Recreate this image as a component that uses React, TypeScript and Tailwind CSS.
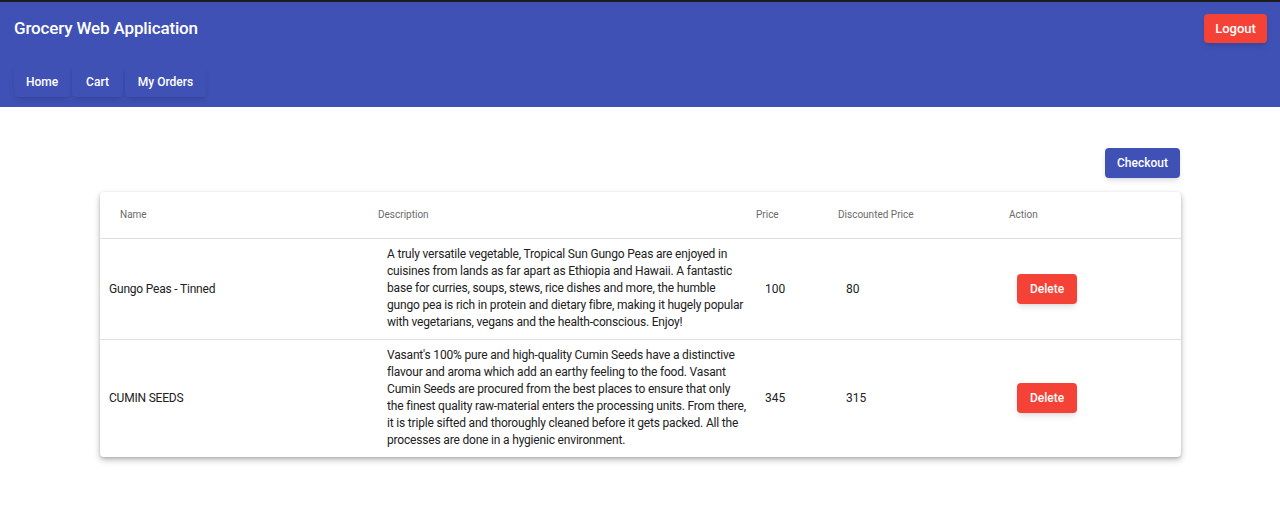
import React from "react";

const items = [
  {
    name: "Gungo Peas - Tinned",
    description:
      "A truly versatile vegetable, Tropical Sun Gungo Peas are enjoyed in cuisines from lands as far apart as Ethiopia and Hawaii. A fantastic base for curries, soups, stews, rice dishes and more, the humble gungo pea is rich in protein and dietary fibre, making it hugely popular with vegetarians, vegans and the health-conscious. Enjoy!",
    price: 100,
    discounted: 80,
  },
  {
    name: "CUMIN SEEDS",
    description:
      "Vasant's 100% pure and high-quality Cumin Seeds have a distinctive flavour and aroma which add an earthy feeling to the food. Vasant Cumin Seeds are procured from the best places to ensure that only the finest quality raw-material enters the processing units. From there, it is triple sifted and thoroughly cleaned before it gets packed. All the processes are done in a hygienic environment.",
    price: 345,
    discounted: 315,
  },
];

const App = () => {
  return (
    <div className="min-h-[522px] bg-white font-['Roboto',sans-serif] text-[#212121]">
      <header className="h-[107px] border-t-2 border-[#1c1c1c] bg-[#3f51b5] pl-[14px] pr-[13px]">
        <div className="flex items-start justify-between pt-[12px]">
          <h1 className="pt-[2px] text-[17px] font-medium tracking-[-0.15px] text-white">
            Grocery Web Application
          </h1>
          <button className="h-[29px] w-[63px] rounded bg-[#f44336] text-[13px] font-medium text-white shadow-md">
            Logout
          </button>
        </div>
        <nav className="mt-[23px] flex gap-[2px]">
          <button className="h-[31px] w-[56px] rounded bg-[#3f51b5] text-[12px] font-medium text-white shadow-md">
            Home
          </button>
          <button className="h-[31px] w-[51px] rounded bg-[#3f51b5] text-[12px] font-medium text-white shadow-md">
            Cart
          </button>
          <button className="h-[31px] w-[81px] rounded bg-[#3f51b5] text-[12px] font-medium text-white shadow-md">
            My Orders
          </button>
        </nav>
      </header>

      <main className="px-[100px] pt-[41px]">
        <div className="flex justify-end">
          <button className="h-[30px] w-[75px] rounded bg-[#3f51b5] text-[12px] font-medium text-white shadow-md">
            Checkout
          </button>
        </div>
        <div className="mt-[14px] w-[1081px] rounded-sm bg-white shadow-[0_3px_6px_rgba(0,0,0,0.25),0_1px_3px_rgba(0,0,0,0.15)]">
          <table className="w-full table-fixed border-collapse text-left">
            <colgroup>
              <col className="w-[278px]" />
              <col className="w-[378px]" />
              <col className="w-[82px]" />
              <col className="w-[171px]" />
              <col />
            </colgroup>
            <thead>
              <tr className="h-[46px] border-b border-[#e0e0e0] text-[10px] text-[#6b6b6b]">
                <th className="pl-[20px] font-normal">Name</th>
                <th className="font-normal">Description</th>
                <th className="font-normal">Price</th>
                <th className="font-normal">Discounted Price</th>
                <th className="font-normal">Action</th>
              </tr>
            </thead>
            <tbody>
              {items.map((item, i) => (
                <tr
                  key={item.name}
                  className={i === 0 ? "border-b border-[#e0e0e0]" : ""}
                >
                  <td className="pl-[9px] text-[12px] tracking-[-0.2px]">
                    {item.name}
                  </td>
                  <td className="py-[7.5px] pl-[9px] pr-[8px] text-[12px] leading-[17px] tracking-[-0.18px]">
                    {item.description}
                  </td>
                  <td className="pl-[9px] text-[12px]">{item.price}</td>
                  <td className="pl-[8px] text-[12px]">{item.discounted}</td>
                  <td className="pl-[8px]">
                    <button className="h-[30px] w-[60px] rounded bg-[#f44336] text-[12px] font-medium text-white shadow-md">
                      Delete
                    </button>
                  </td>
                </tr>
              ))}
            </tbody>
          </table>
        </div>
      </main>
    </div>
  );
};

export default App;
